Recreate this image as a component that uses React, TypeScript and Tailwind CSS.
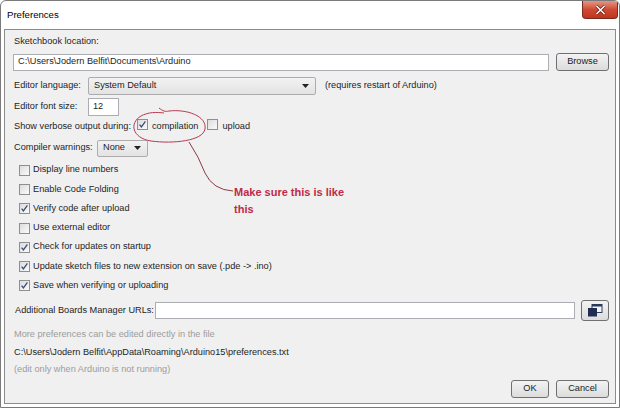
import React from "react";

const font = { fontFamily: '"Liberation Sans", Arial, sans-serif' };

function Check({ checked }: { checked?: boolean }) {
  return (
    <span className="relative inline-flex h-[11px] w-[11px] shrink-0 items-center justify-center border border-[#8e8f8f] bg-gradient-to-br from-[#dcdcdc] to-[#fbfbfb]">
      {checked && (
        <svg width="9" height="9" viewBox="0 0 9 9" className="absolute">
          <path d="M1.6 4.6 L3.4 7 L7.4 1.4" fill="none" stroke="#3d4d78" strokeWidth="1.3" />
        </svg>
      )}
    </span>
  );
}

function Button({ children, className }: { children: React.ReactNode; className: string }) {
  return (
    <div
      className={
        "flex items-center justify-center rounded-[3px] border border-[#707070] bg-gradient-to-b from-[#f3f3f3] to-[#dcdcdc] text-[#1a1a1a] " +
        className
      }
    >
      {children}
    </div>
  );
}

function Combo({ value, className }: { value: string; className: string }) {
  return (
    <div
      className={
        "flex items-center justify-between rounded-[2px] border border-[#acacac] bg-gradient-to-b from-[#f2f2f2] to-[#e3e3e3] pl-[5px] pr-[6px] " +
        className
      }
    >
      <span>{value}</span>
      <svg width="7" height="4" viewBox="0 0 7 4">
        <path d="M0 0 L7 0 L3.5 4 Z" fill="#222" />
      </svg>
    </div>
  );
}

const options: [string, boolean][] = [
  ["Display line numbers", false],
  ["Enable Code Folding", false],
  ["Verify code after upload", true],
  ["Use external editor", false],
  ["Check for updates on startup", true],
  ["Update sketch files to new extension on save (.pde -> .ino)", true],
  ["Save when verifying or uploading", true],
];

export default function App() {
  return (
    <div
      className="relative flex h-[408px] w-[620px] flex-col overflow-hidden rounded-t-[6px] border border-[#7a7a7a] bg-white text-[9.2px] text-[#1e1e1e]"
      style={font}
    >
      {/* title bar */}
      <div className="flex h-[28px] shrink-0 items-center pl-[6px] text-[9.6px] text-black">Preferences</div>
      <div className="absolute right-[1px] top-0 flex h-[18px] w-[36px] items-center justify-center rounded-b-[4px] border border-t-0 border-[#7b2a22] bg-gradient-to-b from-[#e39584] via-[#cf4a32] to-[#c0341e]">
        <svg width="11" height="10" viewBox="0 0 11 10">
          <path d="M1.5 1 L9.5 9 M9.5 1 L1.5 9" stroke="#5a1a12" strokeWidth="3" />
          <path d="M1.5 1 L9.5 9 M9.5 1 L1.5 9" stroke="#ffffff" strokeWidth="1.6" />
        </svg>
      </div>

      {/* content panel */}
      <div className="mx-[3px] mb-[3px] flex flex-1 flex-col border border-[#8c8c8c] bg-[#f0f0f0] pl-[8px] pr-[6px]">
        <div className="mt-[6px] flex h-[12px] items-center pl-[1px]">Sketchbook location:</div>

        <div className="mt-[5px] flex h-[18px] items-center gap-[7px]">
          <div className="flex h-[17px] flex-1 items-center border border-[#abadb3] bg-white pl-[4px]">
            C:\Users\Jodern Belfit\Documents\Arduino
          </div>
          <Button className="h-[18px] w-[53px]">Browse</Button>
        </div>

        <div className="mt-[6px] flex h-[18px] items-center pl-[1px]">
          <span className="w-[74px]">Editor language:</span>
          <Combo value="System Default" className="h-[18px] w-[228px]" />
          <span className="ml-[9px]">(requires restart of Arduino)</span>
        </div>

        <div className="mt-[3px] flex h-[18px] items-center pl-[1px]">
          <span className="w-[74px]">Editor font size:</span>
          <div className="flex h-[18px] w-[31px] items-center border border-[#abadb3] bg-white pl-[4px]">12</div>
        </div>

        <div className="mt-[3px] flex h-[16px] items-center pl-[1px]">
          <span>Show verbose output during:</span>
          <span className="ml-[6px]">
            <Check checked />
          </span>
          <span className="ml-[4px]">compilation</span>
          <span className="ml-[9px]">
            <Check />
          </span>
          <span className="ml-[4px]">upload</span>
        </div>

        <div className="mt-[4px] flex h-[18px] items-center pl-[1px]">
          <span className="w-[83px]">Compiler warnings:</span>
          <Combo value="None" className="h-[17px] w-[51px]" />
        </div>

        <div className="mt-[3.5px] flex flex-col pl-[6px]">
          {options.map(([label, checked]) => (
            <div key={label} className="flex h-[19.3px] items-center gap-[3px]">
              <Check checked={checked} />
              <span>{label}</span>
            </div>
          ))}
        </div>

        <div className="mt-[4.4px] flex h-[21px] items-center pl-[2px]">
          <span className="w-[140px]">Additional Boards Manager URLs:</span>
          <div className="h-[17px] w-[420px] border border-[#abadb3] bg-white" />
          <Button className="ml-[6px] h-[21px] w-[28px]">
            <svg width="16" height="13" viewBox="0 0 16 13">
              <rect x="5" y="0.5" width="10" height="8" fill="#f4f6fa" stroke="#2b3a5c" strokeWidth="1" />
              <rect x="5" y="0.5" width="10" height="2" fill="#2b3a5c" />
              <rect x="1" y="4" width="9" height="8.5" fill="#1f2d52" />
            </svg>
          </Button>
        </div>

        <div className="mt-[8px] flex h-[12px] items-center pl-[1px] text-[#9c9c9c]">
          More preferences can be edited directly in the file
        </div>
        <div className="mt-[6px] flex h-[12px] items-center pl-[1px]">
          C:\Users\Jodern Belfit\AppData\Roaming\Arduino15\preferences.txt
        </div>
        <div className="mt-[5px] flex h-[12px] items-center pl-[1px] text-[#9c9c9c]">
          (edit only when Arduino is not running)
        </div>

        <div className="mt-[4px] flex h-[18px] items-center justify-end gap-[7px]">
          <Button className="h-[18px] w-[38px]">OK</Button>
          <Button className="h-[18px] w-[53px]">Cancel</Button>
        </div>
      </div>

      {/* annotation */}
      <svg className="pointer-events-none absolute left-0 top-0" width="620" height="408" viewBox="0 0 620 408">
        <path
          d="M158 107 C162 110 164 111 168 110 C186 108 206 115 204 128 C202 140 172 143 150 140 C131 137 128 122 140 115 C147 111 156 111 163 112"
          fill="none"
          stroke="#b83a52"
          strokeWidth="1"
        />
        <path d="M188 141 Q198 156 204 172 Q212 189 232 190" fill="none" stroke="#8a3a4a" strokeWidth="1" />
      </svg>
      <div className="absolute left-[233px] top-[183px] text-[11px] font-bold leading-[17px] text-[#c02a44]">
        <div>Make sure this is like</div>
        <div>this</div>
      </div>
    </div>
  );
}
